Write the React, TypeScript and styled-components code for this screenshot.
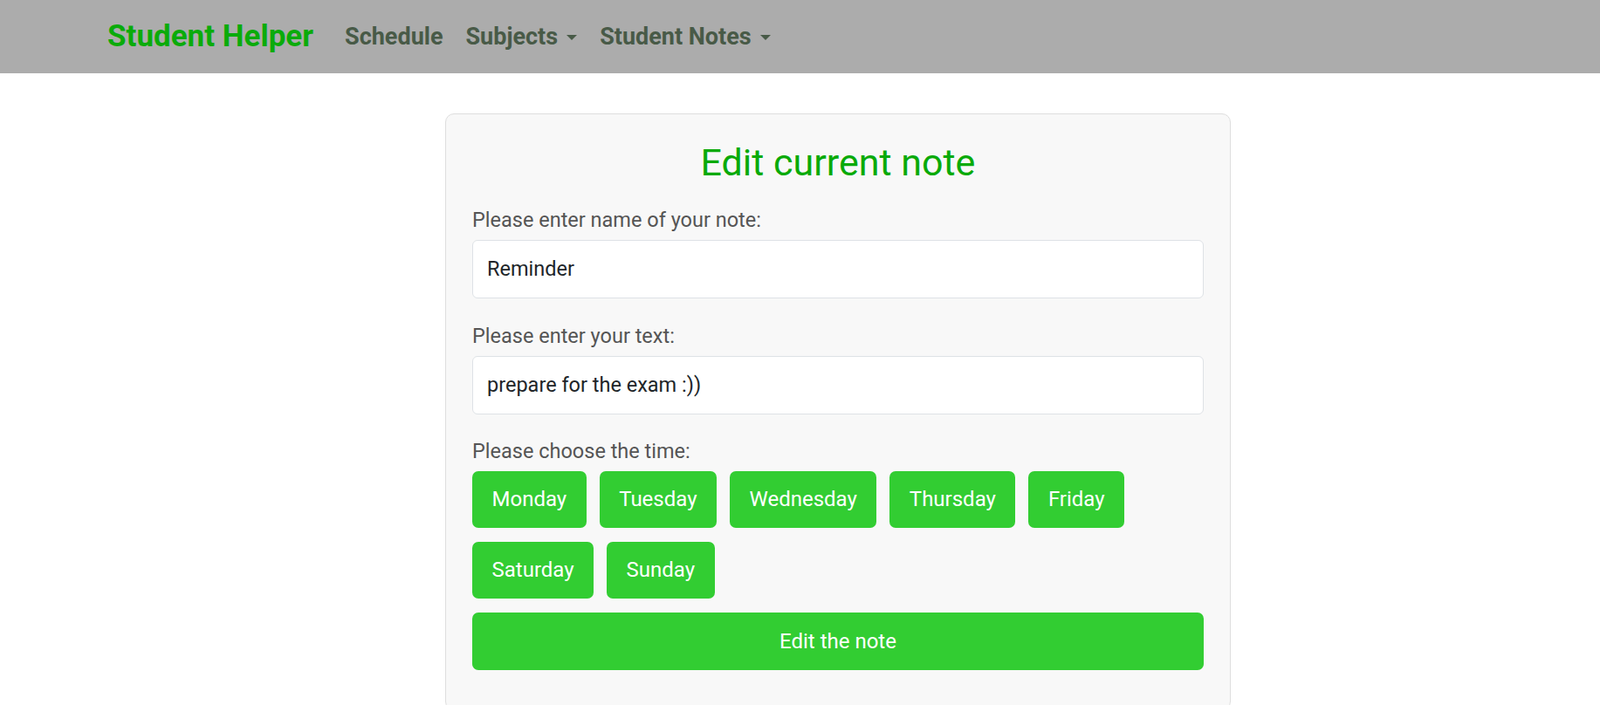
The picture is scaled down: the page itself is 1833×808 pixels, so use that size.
import React from "react";
import styled, { createGlobalStyle } from "styled-components";

const GlobalStyle = createGlobalStyle`
  html, body {
    margin: 0;
    padding: 0;
    background: #ffffff;
    overflow: hidden;
  }
  body {
    font-family: Roboto, "Liberation Sans", sans-serif;
  }
  * { box-sizing: border-box; }
`;

const NavBar = styled.nav`
  height: 84px;
  background: #acacac;
  display: flex;
  align-items: center;
  padding-left: 123px;
`;

const Brand = styled.a`
  font-size: 35px;
  font-weight: 700;
  color: #0aab0a;
  text-decoration: none;
  margin-right: 36px;
  line-height: 1;
  padding-bottom: 2px;
`;

const NavList = styled.ul`
  display: flex;
  align-items: center;
  gap: 26px;
  list-style: none;
  margin: 0;
  padding: 0;
`;

const NavLink = styled.li`
  display: flex;
  align-items: center;
  gap: 10px;
  font-size: 27px;
  font-weight: 700;
  color: #485a47;
  cursor: pointer;
`;

const Caret = styled.span`
  width: 0;
  height: 0;
  border-left: 6.5px solid transparent;
  border-right: 6.5px solid transparent;
  border-top: 6px solid #485a47;
  margin-top: 2px;
`;

const Main = styled.main`
  padding-top: 46px;
`;

const Card = styled.section`
  width: 900px;
  margin-left: 510px;
  background: #f8f8f8;
  border: 1px solid #dedede;
  border-radius: 10px;
  padding: 30px 30px 45px;
`;

const Title = styled.h1`
  margin: 0 0 24px;
  text-align: center;
  font-size: 43px;
  line-height: 1.2;
  font-weight: 400;
  color: #09aa09;
`;

const Field = styled.div<{ $gap: number }>`
  margin-bottom: ${(p) => p.$gap}px;
`;

const Label = styled.label`
  display: block;
  font-size: 23.5px;
  line-height: 30px;
  color: #555555;
  margin-bottom: 8px;
`;

const Input = styled.input`
  display: block;
  width: 100%;
  height: 67px;
  padding: 0 16px;
  border: 1px solid #dee2e6;
  border-radius: 6px;
  background: #ffffff;
  color: #212529;
  font-family: inherit;
  font-size: 23.5px;
  outline: none;
`;

const Days = styled.div`
  display: flex;
  flex-wrap: wrap;
  gap: 16px 15px;
`;

const GreenButton = styled.button<{ $wide?: boolean }>`
  height: ${(p) => (p.$wide ? 66 : 65)}px;
  width: ${(p) => (p.$wide ? "100%" : "auto")};
  margin-top: ${(p) => (p.$wide ? 16 : 0)}px;
  padding: 0 22.5px;
  background: #32cd32;
  color: #ffffff;
  border: none;
  border-radius: 7px;
  font-family: inherit;
  font-size: 24px;
  cursor: pointer;
`;

const days = ["Monday", "Tuesday", "Wednesday", "Thursday", "Friday", "Saturday", "Sunday"];

export default function App() {
  return (
    <>
      <GlobalStyle />
      <NavBar>
        <Brand href="#">Student Helper</Brand>
        <NavList>
          <NavLink>Schedule</NavLink>
          <NavLink>
            Subjects
            <Caret />
          </NavLink>
          <NavLink>
            Student Notes
            <Caret />
          </NavLink>
        </NavList>
      </NavBar>
      <Main>
        <Card>
          <Title>Edit current note</Title>
          <Field $gap={28}>
            <Label>Please enter name of your note:</Label>
            <Input defaultValue="Reminder" />
          </Field>
          <Field $gap={27}>
            <Label>Please enter your text:</Label>
            <Input defaultValue="prepare for the exam :))" />
          </Field>
          <Field $gap={0}>
            <Label>Please choose the time:</Label>
            <Days>
              {days.map((d) => (
                <GreenButton key={d} type="button">
                  {d}
                </GreenButton>
              ))}
            </Days>
          </Field>
          <GreenButton $wide type="button">
            Edit the note
          </GreenButton>
        </Card>
      </Main>
    </>
  );
}
